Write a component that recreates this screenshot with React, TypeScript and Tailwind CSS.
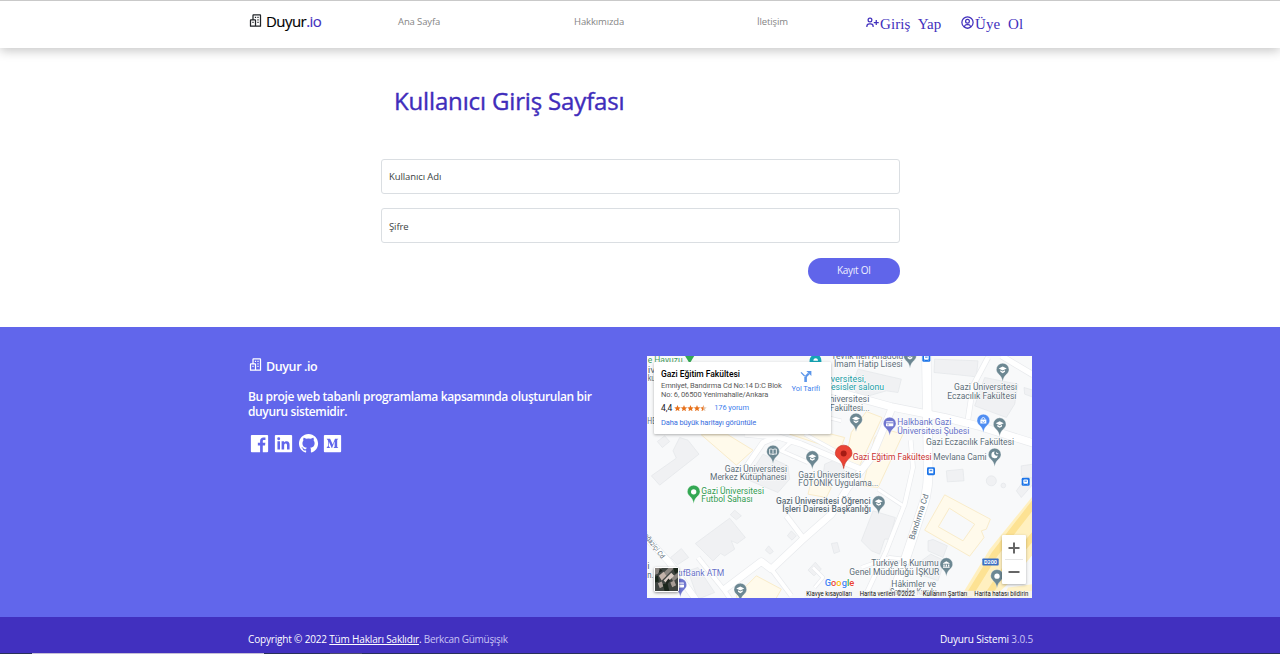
import { BiBuildings, BiUserPlus, BiUserCircle, BiLogoFacebookSquare, BiLogoLinkedinSquare, BiLogoGithub, BiLogoMediumSquare } from "react-icons/bi";

const UI = "font-['Open_Sans','Noto_Sans',sans-serif]";

type PinKind = "school" | "book" | "card" | "bag" | "moon" | "dot" | "bank";

function Pin({ x, y, color, kind }: { x: number; y: number; color: string; kind: PinKind }) {
  return (
    <g transform={`translate(${x} ${y})`}>
      <path
        d="M0 34C-2 24-4 19-10 13C-16 8-19 3-19-3A19 19 0 0 1 19-3C19 3 16 8 10 13C4 19 2 24 0 34Z"
        fill={color}
        stroke="#fff"
        strokeWidth="1"
      />
      {kind === "school" && (
        <g fill="#fff">
          <path d="M-12-6L0-12L12-6L0 0Z" />
          <path d="M-7-1L0 3L7-1V4L0 8L-7 4Z" />
        </g>
      )}
      {kind === "book" && <path d="M-10-10C-5-11-2-10 0-8C2-10 5-11 10-10V5C5 4 2 5 0 7C-2 5-5 4-10 5ZM0-8V7" fill="none" stroke="#fff" strokeWidth="2.6" />}
      {kind === "card" && (
        <g>
          <rect x="-11" y="-10" width="22" height="15" rx="2" fill="#fff" />
          <path d="M-11-5H11" stroke={color} strokeWidth="3" />
          <path d="M-8 1H-2" stroke={color} strokeWidth="2" />
        </g>
      )}
      {kind === "bag" && (
        <g>
          <path d="M-9-6H9V6H-9Z" fill="#fff" />
          <path d="M-5-6A5 6 0 0 1 5-6" fill="none" stroke="#fff" strokeWidth="2.5" />
          <path d="M-4-1A4 4 0 0 0 4-1" fill="none" stroke={color} strokeWidth="2" />
        </g>
      )}
      {kind === "moon" && <path d="M0-12A10 10 0 1 0 10 0A8 8 0 0 1 0-12ZM6-11L8-7L12-7L9-4L4-6Z" fill="#fff" />}
      {kind === "dot" && <circle cy="-2" r="8" fill="#fff" />}
      {kind === "bank" && <path d="M-10-6L0-12L10-6V-4H-10ZM-9-2H-5V4H-9ZM-2-2H2V4H-2ZM5-2H9V4H5ZM-10 5H10V8H-10Z" fill="#fff" />}
    </g>
  );
}

type LabelProps = { x: number; y: number; w: number; children: string; color?: string; size?: number; bold?: boolean };

function Label({ x, y, w, children, color = "#5c6d78", size = 25.5, bold }: LabelProps) {
  return (
    <text
      x={x}
      y={y}
      textLength={w}
      lengthAdjust="spacingAndGlyphs"
      fill={color}
      fontSize={size}
      fontWeight={bold ? 500 : 400}
      stroke="#fff"
      strokeWidth="3"
      strokeLinejoin="round"
      paintOrder="stroke"
    >
      {children}
    </text>
  );
}

const roads: { d: string; w: number }[] = [
  { d: "M845 0L850 300C852 380 850 420 830 470C810 530 795 580 770 650L735 745", w: 26 },
  { d: "M560 108L740 158L900 190L1000 215L1170 268", w: 22 },
  { d: "M745 155L680 310L610 400L560 480L470 560L380 645L350 622L240 705", w: 20 },
  { d: "M300 240L400 248L470 270L600 325L660 350", w: 16 },
  { d: "M395 248L355 265L300 345", w: 15 },
  { d: "M440 262L410 290L490 325", w: 10 },
  { d: "M1030 10L985 95L970 195", w: 14 },
  { d: "M1070 5L1165 62", w: 16 },
  { d: "M425 485L482 560", w: 14 },
  { d: "M380 645L440 725", w: 12 },
  { d: "M160 610L240 710L260 740", w: 12 },
  { d: "M0 545L70 620L160 745", w: 18 },
  { d: "M700 405L780 458", w: 9 },
  { d: "M798 258L805 340L780 450L725 590L655 740", w: 12 },
  { d: "M505 640L535 670L510 700", w: 8 },
  { d: "M650 640L735 610L780 615", w: 9 },
  { d: "M480 240L590 300M470 170L590 200", w: 9 },
];

const buildings = [
  "M20 365L95 312L85 290L105 250L130 258L163 300L45 393Z",
  "M38 262L60 245L75 262L53 280Z",
  "M152 568L255 492L302 550L278 568L260 560L270 585L240 605L228 598L205 620Z",
  "M257 482L270 468L290 485L275 497Z",
  "M78 610L110 583L132 610L98 632Z",
  "M305 375L355 300L430 335L435 375L400 415L340 390Z",
  "M428 545L440 530L455 545L442 558Z",
  "M362 588L372 575L386 592L376 600Z",
  "M560 568L578 565L585 592L568 598Z",
  "M490 648L512 624L530 645L508 665Z",
  "M650 560L685 470L752 490L735 555L720 555L705 600L680 590Z",
  "M640 45L770 75L760 115L725 110L655 130L620 100Z",
  "M870 15L1000 20L995 68L940 62L868 55Z",
  "M1020 70L1120 90L1110 150L1085 190L990 155Z",
  "M1138 100L1165 108L1162 128L1140 120Z",
  "M905 350L955 345L958 380L908 383Z",
  "M1115 410L1155 355L1165 390L1130 430Z",
  "M1130 335L1165 330V372L1130 365Z",
  "M850 560L865 556L908 575L895 610L850 590Z",
  "M830 620L858 600L900 620L880 680L825 660Z",
  "M540 330L575 315L600 350L570 380L535 365Z",
  "M130 650L160 640L210 715L160 735Z",
];

const yellowBuildings = [
  "M170 242L250 242L325 288L275 333Z",
  "M435 240L490 222L600 250L585 290Z",
  "M620 235L665 172L712 190L640 345L600 330Z",
  "M690 250L720 225L775 240L700 400L655 395Z",
  "M500 380L560 400L545 430L490 420Z",
  "M275 725L335 665L410 705L390 740L280 740Z",
];

function MapDrawing() {
  return (
    <svg
      viewBox="7 5.5 1155 726"
      width="385"
      height="242"
      className="block font-['Roboto',sans-serif]"
      role="img"
      aria-label="Gazi Eğitim Fakültesi"
    >
      <rect width="1170" height="741" fill="#f8f9fa" />
      <g fill="#f0f1f3" stroke="#e3e5e8" strokeWidth="2">
        {buildings.map((d) => <path key={d} d={d} />)}
        <circle cx="1040" cy="380" r="15" />
        <circle cx="1076" cy="394" r="7" />
      </g>
      <g fill="#fffaeb" stroke="#f9ecca" strokeWidth="3">
        {yellowBuildings.map((d) => <path key={d} d={d} />)}
        <path fillRule="evenodd" d="M900 422L1037 495L1025 525L1010 530L1018 550L975 606L840 528ZM914 462L990 510L955 560L881 518Z" />
      </g>
      <g fill="none" stroke="#e8eaed" strokeLinejoin="round">
        {roads.map((r) => <path key={r.d} d={r.d} strokeWidth={r.w + 4} />)}
      </g>
      <g fill="none" stroke="#fff" strokeLinejoin="round">
        {roads.map((r) => <path key={r.d} d={r.d} strokeWidth={r.w} />)}
      </g>
      <path d="M1165 425L1035 585L940 741H1035L1100 680L1165 600Z" fill="#fff0c0" />
      <path d="M1170 445L1050 600L960 745M1170 540L1085 640L1015 745" fill="none" stroke="#fde293" strokeWidth="20" />
      <path d="M1070 741L1090 700L1165 690V741Z" fill="#fff2c8" />

      <Label x={9} y={26} w={105} color="#3b9a59">e Havuzu</Label>
      <path d="M118 0H152L135 28Z" fill="#34a853" />
      <path d="M495 26C492 8 505 0 513 0C522 0 532 8 530 26Z" fill="#16a5b5" />
      <path d="M506 20C506 10 520 10 520 20Z" fill="#fff" />
      <Label x={9} y={57} w={23}>iv</Label>
      <Label x={9} y={82} w={23}>ku</Label>
      <Label x={8} y={209} w={26}>HE</Label>
      <Label x={8} y={645} w={7}>i</Label>
      <Label x={8} y={671} w={19}>n.</Label>
      <Label x={560} y={14} w={216}>Tevfik İleri Anadolu</Label>
      <Label x={568} y={38} w={206}>İmam Hatip Lisesi</Label>
      <Label x={520} y={83} w={143} color="#169ba5">Üniversitesi,</Label>
      <Label x={545} y={109} w={173} color="#169ba5">Tesisler salonu</Label>
      <Label x={537} y={145} w={137}>Üniversitesi</Label>
      <Label x={556} y={170} w={119}>Fakültesi...</Label>
      <Label x={928} y={109} w={189}>Gazi Üniversitesi</Label>
      <Label x={908} y={134} w={207}>Eczacılık Fakültesi</Label>
      <Label x={758} y={214} w={162} color="#6670c7">Halkbank Gazi</Label>
      <Label x={758} y={239} w={216} color="#6670c7">Üniversitesi Şubesi</Label>
      <Label x={844} y={272} w={264}>Gazi Eczacılık Fakültesi</Label>
      <Label x={866} y={319} w={160}>Mevlana Cami</Label>
      <Label x={240} y={354} w={187}>Gazi Üniversitesi</Label>
      <Label x={196} y={379} w={230}>Merkez Kütüphanesi</Label>
      <Label x={461} y={372} w={188}>Gazi Üniversitesi</Label>
      <Label x={461} y={397} w={240}>FOTONİK Uygulama...</Label>
      <Label x={170} y={419} w={188} color="#319a51">Gazi Üniversitesi</Label>
      <Label x={170} y={444} w={154} color="#319a51">Futbol Sahası</Label>
      <Label x={394} y={449} w={284} bold>Gazi Üniversitesi Öğrenci</Label>
      <Label x={413} y={475} w={266} bold>İşleri Dairesi Başkanlığı</Label>
      <Label x={680} y={637} w={202}>Türkiye İş Kurumu</Label>
      <Label x={614} y={662} w={270}>Genel Müdürlüğü İŞKUR</Label>
      <Label x={740} y={698} w={134}>Hâkimler ve</Label>
      <Label x={736} y={724} w={140}>Savcılar Kurulu</Label>
      <Label x={65} y={667} w={174} color="#6670c7">VakıfBank ATM</Label>
      <g transform="translate(808 558) rotate(-72)">
        <Label x={0} y={0} w={142} size={24}>Bandırma Cd</Label>
      </g>
      <g transform="translate(-10 535) rotate(53)">
        <Label x={0} y={0} w={100} size={21}>Boğaziçi Cd</Label>
      </g>

      <Pin x={796} y={8} color="#6c8792" kind="school" />
      <Pin x={1074} y={49} color="#6c8792" kind="school" />
      <Pin x={634} y={199} color="#6c8792" kind="school" />
      <Pin x={735} y={211} color="#6f76cf" kind="card" />
      <Pin x={1016} y={202} color="#4f8df2" kind="bag" />
      <Pin x={1065} y={213} color="#6c8792" kind="school" />
      <Pin x={1050} y={304} color="#6c8792" kind="moon" />
      <Pin x={385} y={295} color="#6c8792" kind="book" />
      <Pin x={503} y={312} color="#6c8792" kind="school" />
      <Pin x={147} y={415} color="#34a853" kind="dot" />
      <Pin x={702} y={447} color="#6c8792" kind="school" />
      <Pin x={905} y={633} color="#6c8792" kind="bank" />
      <Pin x={1057} y={668} color="#6c8792" kind="dot" />
      <Pin x={287} y={709} color="#6c8792" kind="school" />
      <Pin x={107} y={695} color="#6f76cf" kind="card" />

      <path d="M597 343C594 326 588 320 581 313C575 307 572 304 572 297A25 24 0 0 1 622 297C622 304 619 307 613 313C606 320 600 326 597 343Z" fill="#ea4335" stroke="#c5372c" strokeWidth="2" />
      <circle cx="597" cy="298" r="9" fill="#a51b14" />
      <Label x={624} y={318} w={237} color="#c93232">Gazi Eğitim Fakültesi</Label>

      {[[845, 11], [859, 351], [1143, 383]].map(([x, y]) => (
        <g key={x} transform={`translate(${x} ${y})`}>
          <rect x="-12" y="-12" width="24" height="24" rx="4" fill="#1a73e8" />
          <rect x="-7" y="-7" width="14" height="13" rx="3" fill="#fff" />
          <path d="M-4-4H4V0H-4ZM-6 6V9M6 6V9" fill="#1a73e8" stroke="#fff" strokeWidth="1" />
        </g>
      ))}
      <rect x="1013" y="613" width="49" height="21" rx="2" fill="#3a6fc4" />
      <text x="1018" y="630" fill="#fff" fontSize="17" fontWeight="700" textLength="39" lengthAdjust="spacingAndGlyphs">D200</text>

      <text x="540" y="696" fontSize="27" fontWeight="500" textLength="89" lengthAdjust="spacingAndGlyphs" stroke="#fff" strokeWidth="3" paintOrder="stroke">
        <tspan fill="#4285f4">G</tspan><tspan fill="#ea4335">o</tspan><tspan fill="#fbbc05">o</tspan><tspan fill="#4285f4">g</tspan><tspan fill="#34a853">l</tspan><tspan fill="#ea4335">e</tspan>
      </text>
      <rect x="480" y="710" width="690" height="31" fill="#f5f5f5" opacity="0.8" />
      <g fill="#111" fontSize="19.5">
        <text x="485" y="727" textLength="137" lengthAdjust="spacingAndGlyphs">Klavye kısayolları</text>
        <text x="645" y="727" textLength="166" lengthAdjust="spacingAndGlyphs">Harita verileri ©2022</text>
        <text x="834" y="727" textLength="134" lengthAdjust="spacingAndGlyphs">Kullanım Şartları</text>
        <text x="989" y="727" textLength="162" lengthAdjust="spacingAndGlyphs">Harita hatası bildirin</text>
      </g>
    </svg>
  );
}

function SatelliteThumb() {
  return (
    <svg viewBox="0 0 24 24" className="block size-full">
      <rect width="24" height="24" fill="#3f4440" />
      <path d="M0 0H7L3 6L0 7ZM14 0H20L12 8L9 5ZM17 10L24 5V10L19 14Z" fill="#8a8580" />
      <path d="M4 8L9 4L12 8L7 13Z" fill="#c3b3aa" />
      <path d="M9 13L17 5L20 8L12 16Z" fill="#d8cbc4" />
      <path d="M3 16L7 14L9 19L5 21ZM16 15L20 13L22 18L18 20Z" fill="#a89d96" />
      <path d="M8 17L13 16L15 24H10ZM0 9L3 8L4 14L0 15ZM19 0H24V4L21 6Z" fill="#1b261c" />
      <path d="M5 0L8 3L4 5ZM14 11L16 13L12 18L11 15Z" fill="#20261f" />
    </svg>
  );
}

function MapCard() {
  return (
    <div className="absolute left-[7px] top-[6px] flex h-[71.5px] w-[177px] justify-between rounded-[1px] bg-white pl-[7px] pr-[11px] font-['Roboto',sans-serif] shadow-[0_1px_3px_rgba(0,0,0,0.3)]">
      <div className="flex w-[126px] flex-col whitespace-nowrap pt-[7px] text-[#5b5b5b]">
        <div className="text-[8.5px] font-medium leading-[10px] tracking-[-0.03px] text-black">Gazi Eğitim Fakültesi</div>
        <div className="mt-[3px] text-[7.5px] leading-[8.6px] tracking-[-0.12px]">
          Emniyet, Bandırma Cd No:14 D:C Blok
          <br />
          No: 6, 06500 Yenimahalle/Ankara
        </div>
        <div className="mt-[4px] flex items-center text-[8.5px] leading-[10px]">
          <span className="text-[#222]">4,4</span>
          <svg viewBox="0 0 50 10" className="ml-[2px] h-[6.5px] w-[33px]" fill="#e7711b">
            {[0, 10, 20, 30].map((x) => (
              <path key={x} transform={`translate(${x} 0)`} d="M5 0L6.4 3.4L10 3.7L7.2 6L8.1 9.6L5 7.6L1.9 9.6L2.8 6L0 3.7L3.6 3.4Z" />
            ))}
            <path d="M45 0L46.4 3.4L50 3.7L47.2 6L48.1 9.6L45 7.6Z" fill="#e3c8b2" />
            <path d="M45 0V7.6L41.9 9.6L42.8 6L40 3.7L43.6 3.4Z" />
          </svg>
          <span className="ml-[7px] text-[7.5px] tracking-[-0.1px] text-[#427fed]">176 yorum</span>
        </div>
        <div className="mt-[5px] text-[7.5px] leading-[10px] tracking-[-0.13px] text-[#3a6fe0]">Daha büyük haritayı görüntüle</div>
      </div>
      <div className="flex flex-col items-center whitespace-nowrap pt-[8px] text-[7.5px] leading-[10px] tracking-[-0.05px] text-[#427fed]">
        <svg viewBox="0 0 12 12" className="mb-[2px] size-[12px]" fill="none" stroke="#5b96ea">
          <path d="M5.6 12V6.6" strokeWidth="2.6" />
          <path d="M5.6 6.8L8.8 3.4" strokeWidth="2.2" />
          <path d="M4.6 6L1 2.4" strokeWidth="1.3" />
          <path d="M6.4 1H11.4V6Z" fill="#5b96ea" stroke="none" />
        </svg>
        Yol Tarifi
      </div>
    </div>
  );
}

function Header() {
  return (
    <header className="relative z-10 flex h-[48px] border-t border-[#c9c9c9] bg-white pl-[248px] shadow-[0_3px_10px_rgba(0,0,0,0.22)]">
      <div className="flex w-[150px] pt-[12px] text-[#212529]">
        <BiBuildings className="size-[15px]" />
        <div className="-mt-[4px] ml-[3px] text-[15px] leading-[24px] tracking-[-0.55px] text-black [-webkit-text-stroke:0.15px]">
          Duyur<span className="text-[#4130bd]">.io</span>
        </div>
      </div>
      <nav className="flex pt-[14px] text-[9.5px] leading-[14px] tracking-[-0.12px] text-[#858585]">
        <a className="w-[176px]">Ana Sayfa</a>
        <a className="w-[183px]">Hakkımızda</a>
        <a className="w-[108px]">İletişim</a>
      </nav>
      <div className="flex pt-[13px] font-['Liberation_Serif',serif] text-[15px] leading-[20px] tracking-[0.1px] text-[#4130bd]">
        <a className="flex w-[95px] whitespace-nowrap">
          <BiUserPlus className="mt-[1px] size-[15px] shrink-0" />
          Giriş&nbsp; Yap
        </a>
        <a className="flex whitespace-nowrap">
          <BiUserCircle className="mt-[1px] size-[15px] shrink-0" />
          Üye&nbsp; Ol
        </a>
      </div>
    </header>
  );
}

function LoginForm() {
  const field =
    "flex h-[35px] w-full items-center rounded-[3px] border border-[#dadee2] bg-white px-[7px] pt-[3px] text-[9.5px] tracking-[-0.1px] text-[#3b3f43]";
  return (
    <main className="h-[279px] pl-[381px] pt-[37px]">
      <h1 className="pl-[13px] text-[24px] leading-[32px] tracking-[-0.15px] text-[#3f2dbb] [-webkit-text-stroke:0.4px]">
        Kullanıcı Giriş Sayfası
      </h1>
      <form className="mt-[41.5px] flex w-[519px] flex-col">
        <label className={field}>Kullanıcı Adı</label>
        <label className={`${field} mt-[14.5px]`}>Şifre</label>
        <button type="button" className="mt-[15px] h-[25.5px] w-[92.5px] self-end rounded-full bg-[#6065ea] pb-px text-[10px] tracking-[-0.25px] text-[#eeefff]">
          Kayıt Ol
        </button>
      </form>
    </main>
  );
}

function Footer() {
  return (
    <footer className="bg-[#6166eb]">
      <div className="flex h-[290px] px-[248px] pt-[29px] text-white">
        <section className="w-[399px] font-semibold">
          <div className="flex pt-[1px]">
            <BiBuildings className="size-[15px]" />
            <div className="ml-[3px] pt-[1px] text-[12.5px] leading-[17px] tracking-[-0.4px]">Duyur .io</div>
          </div>
          <p className="mt-[14px] w-[360px] text-[12px] leading-[15px] tracking-[-0.37px]">
            Bu proje web tabanlı programlama kapsamında oluşturulan bir
            <br />
            duyuru sistemidir.
          </p>
          <div className="mt-[12.5px] flex gap-[1.3px]">
            <BiLogoFacebookSquare className="size-[23px]" />
            <BiLogoLinkedinSquare className="size-[23px]" />
            <BiLogoGithub className="size-[23px]" />
            <BiLogoMediumSquare className="size-[23px]" />
          </div>
        </section>
        <section className="relative h-[242.5px] w-[385px] shrink-0 overflow-hidden">
          <MapDrawing />
          <MapCard />
          <div className="absolute bottom-[6.5px] left-[7px] size-[25px] rounded-[2px] border border-white shadow-[0_1px_3px_rgba(0,0,0,0.4)]">
            <SatelliteThumb />
          </div>
          <div className="absolute bottom-[14.5px] right-[6px] flex h-[49px] w-[24px] flex-col items-center rounded-[1px] bg-white pt-[7px] shadow-[0_1px_3px_rgba(0,0,0,0.3)]">
            <svg viewBox="0 0 12 12" className="size-[12px]" stroke="#666" strokeWidth="2">
              <path d="M6 0.5V11.5M0.5 6H11.5" />
            </svg>
            <div className="mt-[5px] h-px w-[18px] bg-[#e6e6e6]" />
            <svg viewBox="0 0 12 12" className="mt-[6px] size-[12px]" stroke="#666" strokeWidth="2">
              <path d="M0.5 6H11.5" />
            </svg>
          </div>
        </section>
      </div>
      <div className="flex h-[36px] justify-between bg-[#4130bf] pl-[248px] pr-[247px] pt-[15px] text-[10px] leading-[14px] tracking-[-0.3px] text-[#c9c4f4]">
        <div>
          <span className="font-medium tracking-[-0.17px] text-white">
            Copyright © 2022 <a className="underline">Tüm Hakları Saklıdır</a>.
          </span>{" "}
          Berkcan Gümüşışık
        </div>
        <div className="tracking-[-0.15px]">
          <span className="font-medium text-white">Duyuru Sistemi</span> 3.0.5
        </div>
      </div>
      <div className="flex h-px bg-[#29305a]">
        <div className="ml-[32px] w-[232px] bg-[#c5bfd6]" />
        <div className="ml-[66px] w-[32px] bg-[#4a4a6a]" />
      </div>
    </footer>
  );
}

export default function App() {
  return (
    <div className={`h-[654px] w-full overflow-hidden bg-white ${UI}`}>
      <div className="w-[1280px] overflow-hidden">
        <Header />
        <LoginForm />
        <Footer />
      </div>
    </div>
  );
}
